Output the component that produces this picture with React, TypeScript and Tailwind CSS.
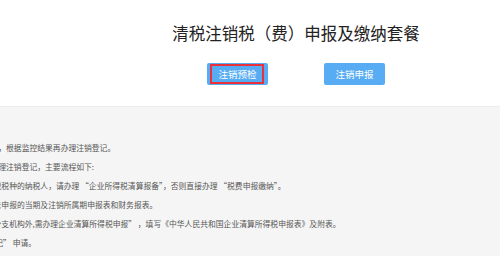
const font = { fontFamily: '"Noto Sans CJK SC", "Noto Sans", sans-serif' };

const steps = [
  "1.纳税人可先进行注销预检，根据监控结果再办理注销登记。",
  "2.预检通过后，纳税人可办理注销登记，主要流程如下:",
  "　　(1)对于存在企业所得税税种的纳税人，请办理 “企业所得税清算报备”，否则直接办理 “税费申报缴纳”。",
  "　　(2)需报送注销前所有未申报的当期及注销所属期申报表和财务报表。",
  "　　(3)纳税人除汇总纳税分支机构外,需办理企业清算所得税申报” ，填写《中华人民共和国企业清算所得税申报表》及附表。",
  "　　(4)最后提交 “注销登记” 申请。",
  "3.办理完成后可在线查询办理结果。",
];

export default function App() {
  return (
    <div className="h-[256px] w-[500px] overflow-hidden bg-white" style={font}>
      <div className="ml-[-94px] w-[780px]">
        <section className="flex h-[106px] flex-col items-center pt-[21px]">
          <h1 className="text-[16.5px] leading-[24px] text-[#222]">清税注销税（费）申报及缴纳套餐</h1>
          <div className="mt-[18px] flex gap-[56px]">
            <button className="relative h-[22px] w-[61px] rounded-[2px] bg-[#58acf3] text-[9.5px] text-white">
              注销预检
              <span className="pointer-events-none absolute left-[2.5px] top-[1px] h-[20px] w-[54px] border-2 border-[#e8313a]" />
            </button>
            <button className="h-[22px] w-[61px] rounded-[2px] bg-[#58acf3] text-[9.5px] text-white">注销申报</button>
          </div>
        </section>
        <section className="h-[150px] border-t border-[#ededed] bg-[#f5f5f5] pt-[32px] text-[7.8px] leading-[18.9px] text-[#555]">
          {steps.map((s) => (
            <p key={s} className="whitespace-nowrap">{s}</p>
          ))}
        </section>
      </div>
    </div>
  );
}
